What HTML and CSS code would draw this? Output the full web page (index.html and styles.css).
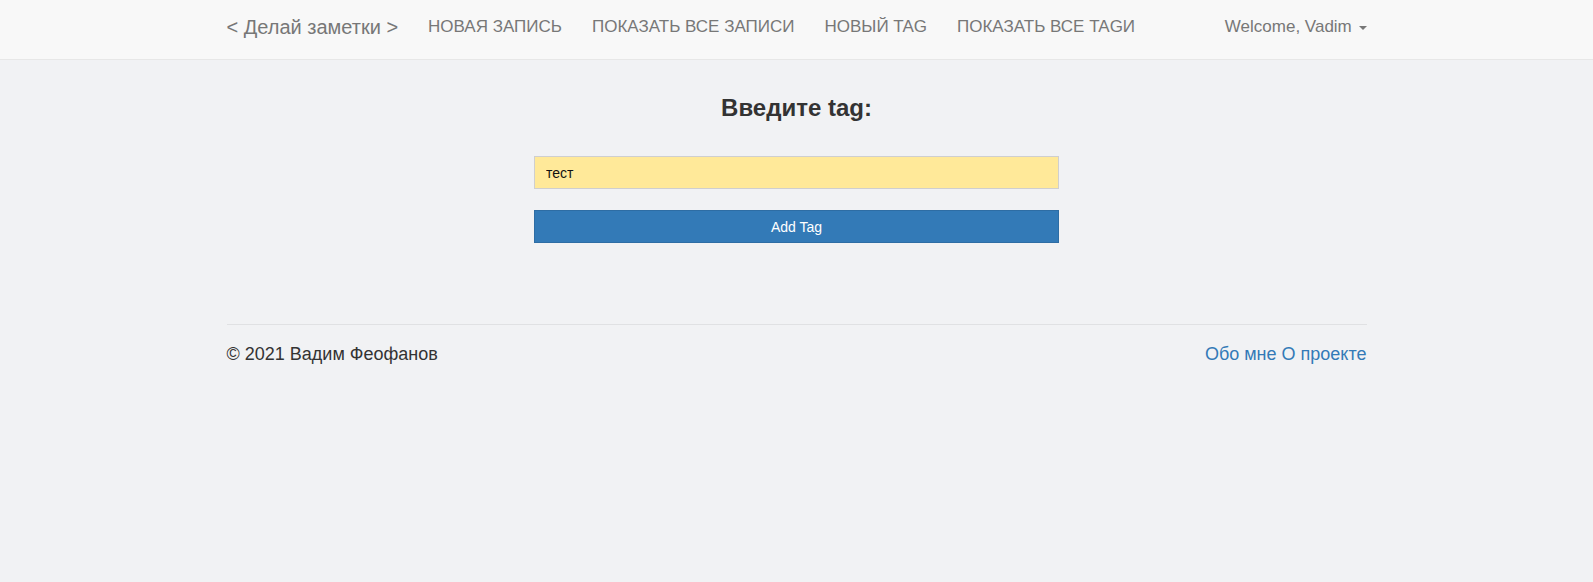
FILE: index.html
```html
<!DOCTYPE html>
<html lang="ru">
<head>
<meta charset="utf-8">
<title>Делай заметки</title>
<link rel="stylesheet" href="styles.css">
</head>
<body>
<nav class="navbar">
  <div class="container nav-inner">
    <a class="brand" href="#">&lt; Делай заметки &gt;</a>
    <ul class="nav-links">
      <li><a href="#">НОВАЯ ЗАПИСЬ</a></li>
      <li><a href="#">ПОКАЗАТЬ ВСЕ ЗАПИСИ</a></li>
      <li><a href="#">НОВЫЙ TAG</a></li>
      <li><a href="#">ПОКАЗАТЬ ВСЕ TAGИ</a></li>
    </ul>
    <a class="user" href="#">Welcome, Vadim <span class="caret"></span></a>
  </div>
</nav>
<main class="container main">
  <h3 class="title">Введите tag:</h3>
  <form class="tag-form">
    <input class="tag-input" type="text" value="тест">
    <button class="btn" type="button">Add Tag</button>
  </form>
</main>
<footer class="container footer">
  <div class="footer-row">
    <span>© 2021 Вадим Феофанов</span>
    <span class="footer-links"><a href="#">Обо мне</a> <a href="#">О проекте</a></span>
  </div>
</footer>
</body>
</html>
```
FILE: styles.css
```css
* { box-sizing: border-box; }
html, body { margin: 0; padding: 0; }
body {
  background: #f1f2f4;
  font-family: "Liberation Sans", Arial, Helvetica, sans-serif;
  color: #333;
  font-size: 14px;
  line-height: 1.42857;
}
a { text-decoration: none; }
.container {
  width: 1140px;
  margin: 0 auto;
}
.navbar {
  background: #f8f8f8;
  border-bottom: 1px solid #e7e7e7;
  height: 60px;
}
.nav-inner {
  display: flex;
  align-items: center;
  height: 59px;
  padding-bottom: 4px;
}
.brand {
  color: #777;
  font-size: 20px;
  padding-bottom: 1px;
}
.nav-links {
  display: flex;
  list-style: none;
  margin: 0 0 0 15px;
  padding: 0;
  flex: 1;
}
.nav-links a {
  display: block;
  color: #777;
  font-size: 17px;
  padding: 0 15px;
}
.user {
  color: #777;
  font-size: 17px;
}
.caret {
  display: inline-block;
  width: 0;
  height: 0;
  margin-left: 2px;
  vertical-align: middle;
  border-top: 4px solid #777;
  border-left: 4px solid transparent;
  border-right: 4px solid transparent;
}
.main {
  display: flex;
  flex-direction: column;
  align-items: center;
  padding-top: 35px;
  padding-bottom: 81px;
}
.title {
  margin: 0;
  font-size: 24px;
  font-weight: bold;
  line-height: 1.1;
  color: #333;
}
.tag-form {
  width: 525px;
  margin-top: 35px;
  display: flex;
  flex-direction: column;
  gap: 21px;
}
.tag-input {
  height: 33px;
  background: #ffe999;
  border: 1px solid #cfcfcf;
  padding: 0 11px;
  font-family: "Liberation Sans", Arial, sans-serif;
  font-size: 14px;
  color: #111;
  outline: none;
}
.btn {
  height: 33px;
  background: #337ab7;
  border: 1px solid #2e6da4;
  color: #fff;
  font-family: "Liberation Sans", Arial, sans-serif;
  font-size: 14px;
  padding: 0;
}
.footer {
  border-top: 1px solid #e0e1e3;
  padding-top: 17px;
}
.footer-row {
  display: flex;
  justify-content: space-between;
  font-size: 18px;
  color: #333;
}
.footer-links a { color: #337ab7; }
```
